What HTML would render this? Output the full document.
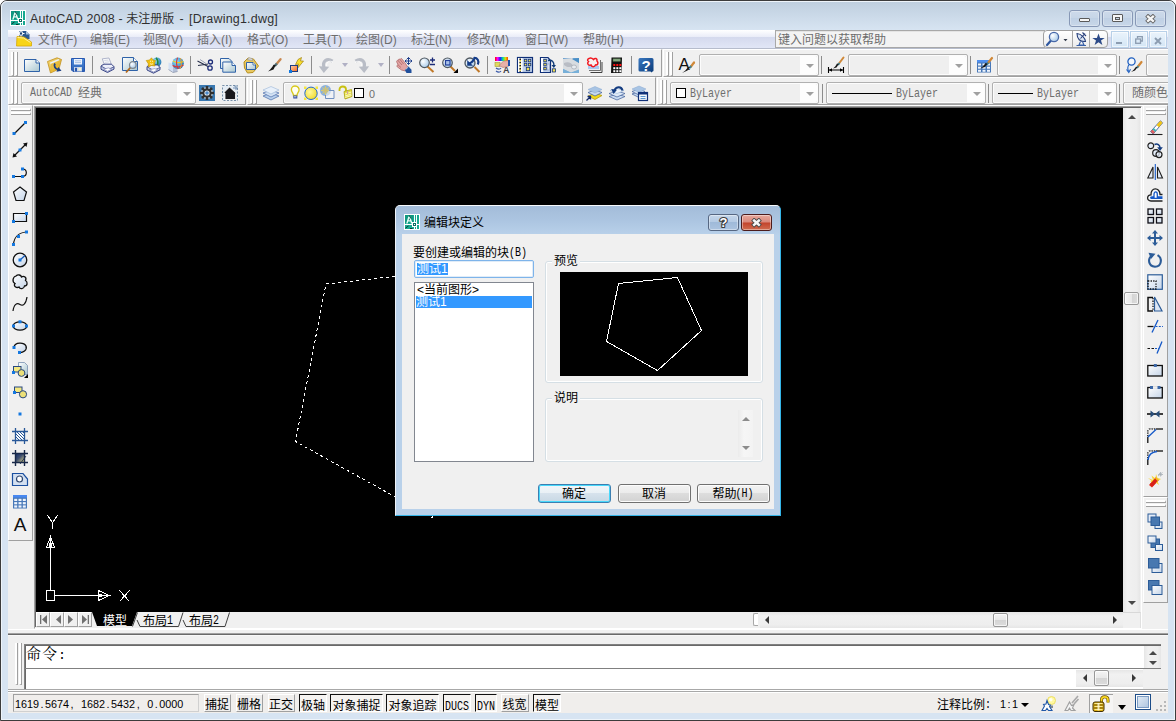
<!DOCTYPE html>
<html lang="zh-CN"><head><meta charset="utf-8"><title>AutoCAD 2008 - 未注册版 - [Drawing1.dwg]</title>
<style>
*{box-sizing:border-box;margin:0;padding:0}
html,body{width:1176px;height:721px;overflow:hidden;background:#fff}
body{font-family:"Liberation Sans","Noto Sans CJK SC",sans-serif;font-size:12px;color:#000;position:relative}
.a{position:absolute}
.t{position:absolute;white-space:nowrap;line-height:1}
#win{left:0;top:0;width:1176px;height:721px;background:#d7e4f2;border:1px solid #3c3c3c;border-radius:7px 7px 0 0}
#winhi{left:1px;top:1px;width:1174px;height:719px;border:1px solid #eef4fa;border-radius:6px 6px 0 0;background:linear-gradient(#bfcfdf 0px,#d7e4f2 28px,#d7e4f2 100%)}
#title{font-size:12.5px;line-height:16px;color:#303030}
.cap{position:absolute;top:10px;width:31px;height:17px;border:1px solid #8798b6;border-radius:3px;background:linear-gradient(#cddaea,#c6d5e7 50%,#bfd0e4 50%,#c8d7e9);box-shadow:inset 0 0 0 1px rgba(255,255,255,.3)}
#menubar{left:8px;top:30px;width:1160px;height:19px;background:linear-gradient(#ffffff 0px,#e9ecf8 7px,#d4d9ed 7px,#e1e6f6 18px,#b6bccc 18px,#b6bccc 19px)}
.mi{position:absolute;top:33px;font-size:12px;color:#6d6d6d;white-space:nowrap;line-height:14px;letter-spacing:0px}
#search{background:#f3f3f3;border:1px solid #a8a8a8;border-right:none;box-shadow:inset 0 1px 0 #e4e4e4}
#infoc{background:linear-gradient(#ffffff,#ececec);border:1px solid #a0a0a0;border-radius:4px}
.mdi{position:absolute;top:31px;width:18px;height:17px;border:1px solid #b8d0e8;background:linear-gradient(#eaf3fb,#d4e6f6);box-shadow:inset 0 0 0 1px rgba(255,255,255,.6)}
#client{left:8px;top:49px;width:1160px;height:664px;background:#f0f0f0;overflow:hidden}
.tb{position:absolute;height:28px;border-top:1px solid #fff;border-left:1px solid #fff;border-bottom:1px solid #a0a0a0;border-right:1px solid #a0a0a0;background:#f0f0f0}
.gv{position:absolute;width:3px;border-left:2px solid #fff;border-right:1px solid #a0a0a0;border-bottom:1px solid #a0a0a0}
.gh{position:absolute;height:3px;border-top:2px solid #fff;border-bottom:1px solid #a0a0a0;border-right:1px solid #a0a0a0}
.sep{position:absolute;width:1px;background:#8c8c8c}
.dd{position:absolute;width:0;height:0;border-left:3.5px solid transparent;border-right:3.5px solid transparent;border-top:4px solid #000}
.combo{position:absolute;height:22px;border:1px solid #b0b0b0;border-radius:2px;background:#efefef;box-shadow:inset 0 0 0 1px #fcfcfc}
.combo .arr{position:absolute;right:4px;top:9px;width:0;height:0;border-left:4px solid transparent;border-right:4px solid transparent;border-top:4px solid #a0a0a0}
.combo .ab{position:absolute;right:1px;top:1px;bottom:1px;width:17px;background:#fdfdfd;border-radius:0 2px 2px 0}
.sun{font-family:"Liberation Mono","Noto Sans CJK SC",monospace;font-size:10px;line-height:12px;display:inline-block;transform:translateY(-1px) scaleY(1.22);transform-origin:0 78%}
.dis{color:#6d6d6d}
.ic{position:absolute;width:16px;height:16px;overflow:visible}
.vsb{background:linear-gradient(90deg,#e6e6e6,#f1f1f1 25%,#eeeeee 80%,#e6e6e6)}
.hsb{background:linear-gradient(#e6e6e6,#f1f1f1 25%,#eeeeee 80%,#e6e6e6)}
.au,.ad,.al,.ar{position:absolute;width:0;height:0}
.au{border-left:4px solid transparent;border-right:4px solid transparent;border-bottom:4px solid #484848}
.ad{border-left:4px solid transparent;border-right:4px solid transparent;border-top:4px solid #484848}
.al{border-top:4px solid transparent;border-bottom:4px solid transparent;border-right:4px solid #383838}
.ar{border-top:4px solid transparent;border-bottom:4px solid transparent;border-left:4px solid #383838}
.thumb{position:absolute;border:1px solid #979797;border-radius:2px;background:linear-gradient(#f4f4f4,#e8e8e8 50%,#d4d4d4 50%,#dcdcdc);box-shadow:inset 0 0 0 1px rgba(255,255,255,.7)}
.nav{position:absolute;width:14px;height:15px;border-left:1px solid #fff;border-top:1px solid #fff;border-right:1px solid #a0a0a0;border-bottom:1px solid #a0a0a0;background:#f0f0f0}
#status{background:#f0eeec;border-top:1px solid #a8a8a8;box-shadow:inset 0 1px 0 #fff}
.sunk{position:absolute;border-left:1px solid #a0a0a0;border-top:1px solid #a0a0a0;border-right:1px solid #d0d0d0;border-bottom:1px solid #d0d0d0}
.sb0,.sb1{position:absolute;height:18px;font-size:12px;line-height:12px;white-space:nowrap;overflow:hidden;text-align:center;padding-top:3px}
.sb0{border-left:1px solid #fff;border-top:1px solid #fff;border-right:1px solid #a0a0a0;border-bottom:1px solid #a0a0a0;padding-top:4px;text-indent:-1px}
.sb1{height:18px;border-left:1px solid #101010;border-top:1px solid #101010;border-right:1px solid #fff;border-bottom:1px solid #fff;padding-top:5px;background:#f5f3f1}
.sb1 .sun,.sb0 .sun{font-size:10px;position:relative;top:1px}
#dlg{left:395px;top:205px;width:386px;height:311px;background:#b9d1ea;border-radius:5px 5px 0 0;border-right:1px solid #35b5e8;border-bottom:1px solid #35b5e8;border-top:1px solid #f6f9fc;border-left:1px solid #eef3f9}
#dlgcap{left:0;top:0;width:384px;height:29px;border-radius:4px 4px 0 0;background:linear-gradient(#a3bcd9,#acc5e1 50%,#b9d1ea)}
#dlgc{left:6px;top:28px;width:372px;height:275px;background:#f0f0f0}
.dcap{position:absolute;top:8px;width:30px;height:17px;border:1px solid #566782;border-radius:3px;box-shadow:inset 0 0 0 1px rgba(255,255,255,.4)}
.grp{position:absolute;border:1px solid #d5dfe5;border-radius:3px;box-shadow:inset 0 0 0 1px #fff}
.glab{font-size:12px;background:#f0f0f0;padding:0 2px;line-height:13px}
.btn{position:absolute;height:19px;border:1px solid #707070;border-radius:3px;background:linear-gradient(#f2f2f2,#ebebeb 50%,#dddddd 50%,#d2d2d2);box-shadow:inset 0 0 0 1px #fcfcfc;text-align:center;font-size:12px;line-height:17px;white-space:nowrap;text-indent:-1px;padding-top:1px}
.btn.def{border-color:#3c7fb1;box-shadow:inset 0 0 0 1px #48d8fb;background:linear-gradient(#f2f6fa,#e8f0f5 50%,#d6e2ec 50%,#c8d8e4)}
.thumb.tv{background:linear-gradient(90deg,#f4f4f4,#e8e8e8 50%,#d4d4d4 50%,#dcdcdc)}
.ss{font-family:"Liberation Sans","Noto Sans CJK SC",sans-serif}
.dig{font-family:"Liberation Sans",sans-serif;font-size:10.8px;line-height:12px}
.pc{display:inline-block;width:6px;text-align:center}
</style></head>
<body>

<svg width="0" height="0" style="position:absolute"><defs>
<linearGradient id="gpage" x1="0" y1="0" x2="1" y2="1"><stop offset="0" stop-color="#ffffff"/><stop offset="1" stop-color="#a9c6d0"/></linearGradient>
<linearGradient id="gfold" x1="0" y1="0" x2="1" y2="1"><stop offset="0" stop-color="#f7dc7a"/><stop offset="1" stop-color="#d9a520"/></linearGradient>
<linearGradient id="gblue" x1="0" y1="0" x2="0" y2="1"><stop offset="0" stop-color="#4f8fe0"/><stop offset="1" stop-color="#2a5db0"/></linearGradient>
<radialGradient id="glens" cx="0.35" cy="0.35" r="0.8"><stop offset="0" stop-color="#ffffff"/><stop offset="1" stop-color="#9cc3e6"/></radialGradient>
<radialGradient id="gglobe" cx="0.35" cy="0.35" r="0.8"><stop offset="0" stop-color="#8fe0ff"/><stop offset="1" stop-color="#1868a8"/></radialGradient>
<radialGradient id="gsun" cx="0.4" cy="0.4" r="0.7"><stop offset="0" stop-color="#fff9a0"/><stop offset="1" stop-color="#f0d820"/></radialGradient>
<linearGradient id="gorange" x1="0" y1="0" x2="1" y2="1"><stop offset="0" stop-color="#ffd0a8"/><stop offset="1" stop-color="#f06820"/></linearGradient>
<linearGradient id="ghelp" x1="0" y1="0" x2="1" y2="1"><stop offset="0" stop-color="#3a78c0"/><stop offset="1" stop-color="#0a3a78"/></linearGradient>
<linearGradient id="grain" x1="0" y1="0" x2="1" y2="0"><stop offset="0" stop-color="#ff0000"/><stop offset="0.2" stop-color="#ff00ff"/><stop offset="0.4" stop-color="#2020ff"/><stop offset="0.6" stop-color="#00e0a0"/><stop offset="0.8" stop-color="#e0e000"/><stop offset="1" stop-color="#ff4000"/></linearGradient>
<linearGradient id="gbox" x1="0" y1="0" x2="1" y2="1"><stop offset="0" stop-color="#ffffff"/><stop offset="1" stop-color="#c4d4e8"/></linearGradient>
<linearGradient id="gbtn" x1="0" y1="0" x2="0" y2="1"><stop offset="0" stop-color="#f4f4f4"/><stop offset="0.5" stop-color="#ececec"/><stop offset="0.5" stop-color="#dedede"/><stop offset="1" stop-color="#d0d0d0"/></linearGradient>
</defs></svg>
<div id="win" class="a"></div><div id="winhi" class="a"></div>
<svg class="a" style="left:10px;top:10px" width="16" height="16" viewBox="0 0 16 16"><rect x="0" y="0" width="16" height="16" fill="#fff"/><rect x="1" y="1" width="14" height="14" fill="#18a890"/><path d="M1 1H9V9H1Z" fill="#109880"/><path d="M2.2 9.5L4.3 2.5H6.2L8.6 9.5H7L6.4 7.5H4.2L3.6 9.5Z" fill="#e8fff8"/><path d="M4.6 6.2H6L5.3 4Z" fill="#0a6a5c"/><path d="M5.3 1.5L6.8 4.5" stroke="#063c34" stroke-width="0.9"/><path d="M1 10.5H15M10.5 1V15M12.5 1V8M12.5 13V15" stroke="#fff" stroke-width="1"/><rect x="8.5" y="8.5" width="4" height="4" fill="#0b6b5e" stroke="#fff" stroke-width="1"/><rect x="10" y="10" width="1" height="1" fill="#fff"/><path d="M1.5 14L4.5 12M6 14.5H8.5" stroke="#063c34" stroke-width="1"/></svg>
<div class="t" id="title" style="left:30px;top:11px"><span style="letter-spacing:.12px">AutoCAD 2008 - </span><span style="font-size:12px">未注册版</span><span style="letter-spacing:.2px;word-spacing:1.5px"> - [Drawing1.dwg]</span></div>
<div class="cap" style="left:1069px"><div class="a" style="left:9px;top:7px;width:11px;height:4px;border:1px solid #5a5a5a;background:#f6f6f6;border-radius:1px"></div></div>
<div class="cap" style="left:1102px"><div class="a" style="left:9px;top:3px;width:11px;height:8px;border:1px solid #5a5a5a;background:#f6f6f6;border-radius:1px"></div><div class="a" style="left:12px;top:6px;width:5px;height:3px;border:1px solid #5a5a5a;background:#c9d6e6"></div></div>
<div class="cap" style="left:1135px"><svg class="a" style="left:8px;top:3px" width="13" height="10" viewBox="0 0 13 10"><path d="M2.6 1.2L10.4 8.2M10.4 1.2L2.6 8.2" stroke="#646464" stroke-width="4.2" fill="none" stroke-linecap="butt"/><path d="M3.2 1.8L9.8 7.6M9.8 1.8L3.2 7.6" stroke="#f6f6f6" stroke-width="2.4" fill="none" stroke-linecap="butt"/></svg></div>
<div id="menubar" class="a"></div>
<svg class="a" style="left:16px;top:30px" width="16" height="17" viewBox="0 0 16 17"><path d="M3 1H10L13.5 4.5V9H3Z" fill="#2a5890"/><path d="M10 1V4.5H13.5Z" fill="#a8c0dc"/><path d="M5 0V7M1.5 3.5H8.5" stroke="#fff" stroke-width="1"/><rect x="3.5" y="2" width="3" height="3" fill="#1c4478" stroke="#fff" stroke-width="0.8"/><path d="M0.5 16L1 6.5L8 7L15.5 12V16Z" fill="#f8d418" stroke="#d8a808" stroke-width="0.8"/><path d="M1.5 7.5L7.5 8L14.5 12.5" stroke="#fff0a0" stroke-width="1" fill="none"/></svg>
<div class="mi" style="left:38px">文件(F)</div><div class="mi" style="left:90px">编辑(E)</div><div class="mi" style="left:143px">视图(V)</div><div class="mi" style="left:197px">插入(I)</div><div class="mi" style="left:247px">格式(O)</div><div class="mi" style="left:303px">工具(T)</div><div class="mi" style="left:356px">绘图(D)</div><div class="mi" style="left:411px">标注(N)</div><div class="mi" style="left:467px">修改(M)</div><div class="mi" style="left:525px">窗口(W)</div><div class="mi" style="left:583px">帮助(H)</div>
<div class="a" id="search" style="left:775px;top:30px;width:270px;height:18px"></div><div class="t" style="left:778px;top:34px;font-size:12px;line-height:13px;color:#6d6d6d">键入问题以获取帮助</div>
<div class="a" id="infoc" style="left:1043px;top:30px;width:65px;height:18px"></div><div class="a" style="left:1072px;top:31px;width:1px;height:16px;background:#a8a8a8"></div><div class="a" style="left:1089px;top:31px;width:1px;height:16px;background:#a8a8a8"></div><svg class="a" style="left:1045px;top:31px" width="62" height="16" viewBox="0 0 62 16"><path d="M2 14L6 9.5" stroke="#3058a0" stroke-width="2.2" stroke-linecap="round"/><circle cx="9" cy="6" r="4.6" fill="url(#glens)" stroke="#4868a8" stroke-width="1.3"/><path d="M18.5 8H22.5L20.5 10.3Z" fill="#303848"/><path d="M32 2.5C32 8 35 11 40.5 10.5C40 7 36.5 3 32 2.5Z" fill="#dce6f4" stroke="#28407c" stroke-width="1.1"/><path d="M35.5 7.5L40 2.5M37.5 1.5L41 5" stroke="#28407c" stroke-width="1.1" fill="none"/><path d="M35.5 10.5L34 14H39L37.5 10.8M31.5 14.5H41" stroke="#3860a8" stroke-width="1.1" fill="none"/><path d="M53.5 2.5L55.1 6.9H59.7L56 9.6L57.4 14L53.5 11.3L49.6 14L51 9.6L47.3 6.9H51.9Z" fill="#2c4a88"/></svg>
<div class="mdi" style="left:1111px"></div><div class="mdi" style="left:1130px"></div><div class="mdi" style="left:1149px"></div><div class="a" style="left:1116px;top:42px;width:6px;height:2px;background:#8c9cb0"></div><svg class="a" style="left:1135px;top:36px" width="8" height="8" viewBox="0 0 8 8"><path d="M2.5 2.5V0.7H7.3V5H5.5" fill="none" stroke="#8c9cb0" stroke-width="1.3"/><rect x="0.7" y="3" width="4.8" height="4.3" fill="none" stroke="#8c9cb0" stroke-width="1.3"/></svg><svg class="a" style="left:1154px;top:37px" width="8" height="8" viewBox="0 0 8 8"><path d="M1 1L7 7M7 1L1 7" stroke="#8c9cb0" stroke-width="1.9"/></svg>
<div id="client" class="a"></div>
<div class="a" style="left:0;top:0;width:1168px;height:110px;overflow:hidden"><div class="tb" style="left:8px;top:49px;width:654px;height:28px"></div><div class="gv" style="left:11px;top:52px;height:24px"></div><div class="gv" style="left:15px;top:52px;height:24px"></div><svg class="ic" style="left:24px;top:57px;width:16px;height:16px" viewBox="0 0 16 16"><path d="M0.5 2.5H12L15.5 6V14.5H0.5Z" fill="url(#gpage)" stroke="#2f62a8"/><path d="M12 2.5V6H15.5" fill="#fff" stroke="#2f62a8"/></svg><svg class="ic" style="left:47px;top:57px;width:16px;height:16px" viewBox="0 0 16 16"><path d="M0.5 4.5L10 0.8L14.5 2.5L12 12L3.5 16Z" fill="url(#gfold)" stroke="#c09020" stroke-width="0.8"/><path d="M3 5.5L11.5 2L12.5 3L5 14Z" fill="#eaf2f8"/><path d="M3.5 7L12.5 3.2L11.5 11.5L4 15.5Z" fill="#e8b830" opacity="0.9"/><path d="M8 6.5C6.5 9 8 11.5 11 12.5" fill="none" stroke="#1c3f80" stroke-width="1.8"/><path d="M9.5 14.8L14.5 13.8L11.3 10Z" fill="#1c3f80"/></svg><svg class="ic" style="left:70px;top:57px;width:16px;height:16px" viewBox="0 0 16 16"><path d="M1.5 1.5H14.5V14.5H3L1.5 13Z" fill="url(#gblue)" stroke="#2858b0"/><rect x="4" y="2" width="8" height="5.5" fill="#eef4fc"/><path d="M5 3.8h6M5 5.6h6" stroke="#98b4dc" stroke-width="0.8"/><rect x="4" y="10" width="8" height="4.5" fill="#c8d4e8"/><rect x="5" y="10.8" width="2" height="3.7" fill="#2858b0"/><rect x="8.5" y="10.8" width="2.5" height="2.7" fill="#f4f4d0"/></svg><svg class="ic" style="left:99px;top:57px;width:16px;height:16px" viewBox="0 0 16 16"><path d="M3.3 1.8L10 1L12.3 7.3L5.6 8.6Z" fill="#f8f9fc" stroke="#a0a6c0" stroke-width="0.8"/><path d="M5.2 3.6L9.5 3M5.8 5.4L10.2 4.8" stroke="#c8ccd8" stroke-width="0.7"/><g transform="translate(0,0.5)"><path d="M2 8.5L5 6.8L12.5 6.8L15 9.3V11.6L8.5 15L2 11.8Z" fill="#c4cce4" stroke="#3c4888" stroke-width="1"/><path d="M2 8.5L5 6.8L12.5 6.8L15 9.3L8.5 12.2Z" fill="#eef0fa" stroke="#3c4888" stroke-width="0.8"/><path d="M4.5 11.6L8.5 13.8L12.8 11.6L9.5 10.4Z" fill="#fff" stroke="#5860a0" stroke-width="0.5"/></g></svg><svg class="ic" style="left:122px;top:57px;width:16px;height:16px" viewBox="0 0 16 16"><path d="M0.5 0.5H11.5L15.5 4.5V13.5H0.5Z" fill="url(#gpage)" stroke="#2f62a8"/><path d="M11.5 0.5V4.5H15.5" fill="#fff" stroke="#2f62a8"/><path d="M4 15.5L8.5 10.5" stroke="#b0681c" stroke-width="1.8"/><circle cx="10.8" cy="8" r="3.3" fill="url(#glens)" stroke="#808890" stroke-width="1.2"/></svg><svg class="ic" style="left:145px;top:57px;width:16px;height:16px" viewBox="0 0 16 16"><circle cx="11.8" cy="5" r="4.6" fill="url(#gglobe)"/><path d="M11 0.8C13 2.5 13.5 6.5 12 9.5" stroke="#208840" stroke-width="1.6" fill="none"/><g transform="translate(0,1.2)"><path d="M2 8.5L5 6.8L12.5 6.8L15 9.3V11.6L8.5 15L2 11.8Z" fill="#c4cce4" stroke="#3c4888" stroke-width="1"/><path d="M2 8.5L5 6.8L12.5 6.8L15 9.3L8.5 12.2Z" fill="#eef0fa" stroke="#3c4888" stroke-width="0.8"/><path d="M4.5 11.6L8.5 13.8L12.8 11.6L9.5 10.4Z" fill="#fff" stroke="#5860a0" stroke-width="0.5"/></g><path d="M1.2 3.5L4.5 3L6.5 0.8L8 3L10.5 3.5L9.5 6.5L10 9L6.5 8.5L3.5 10L3.2 6.5Z" fill="#f0c010" stroke="#c09000" stroke-width="0.6"/><path d="M5 4.5L6 4M7 4.5L8 4M5 6.5C6 7.5 7 7.5 8 6.5" stroke="#fff8d0" stroke-width="0.9" fill="none"/></svg><svg class="ic" style="left:168px;top:57px;width:16px;height:16px" viewBox="0 0 16 16"><path d="M0.5 5.5L5 7V15L0.5 12.5Z" fill="#d4e0f4"/><path d="M5 7L9.5 12V14.5L5 15.5Z" fill="#b4c0d8"/><path d="M0.5 12.5L5 15.5L9.5 14.5" fill="none" stroke="#909ab0" stroke-width="0.8"/><circle cx="10" cy="6.3" r="5.8" fill="url(#gglobe)"/><path d="M5 4C8 6 12 6 15.5 4.5" stroke="#e8d020" stroke-width="1.1" fill="none"/><path d="M9.5 0.6C8 5 8.5 9 10.3 12" stroke="#e03030" stroke-width="1.1" fill="none"/><path d="M4.6 8.5C8 10.5 12.5 10 15.5 8" stroke="#e03030" stroke-width="1.1" fill="none"/><path d="M12.5 1.2C14 5 13.5 9 12 11.7" stroke="#f0a030" stroke-width="1" fill="none"/></svg><svg class="ic" style="left:197px;top:57px;width:16px;height:16px" viewBox="0 0 16 16"><path d="M0.5 4L11 9.5M1 8.5L11 7" stroke="#28304c" stroke-width="1.1" fill="none"/><path d="M3 2.5L9 6.5" stroke="#8890a8" stroke-width="0.8"/><circle cx="13.5" cy="5" r="2" fill="none" stroke="#1c2c78" stroke-width="1.3"/><circle cx="13" cy="11" r="2.2" fill="none" stroke="#1c2c78" stroke-width="1.3"/></svg><svg class="ic" style="left:220px;top:57px;width:16px;height:16px" viewBox="0 0 16 16"><path d="M0.5 1.5H9L12 4.5V11.5H0.5Z" fill="url(#gpage)" stroke="#2f62a8"/><path d="M2.8 5H12L15.5 8.5V15.2H2.8Z" fill="url(#gpage)" stroke="#2f62a8"/><path d="M12 5V8.5H15.5" fill="#fff" stroke="#2f62a8"/></svg><svg class="ic" style="left:243px;top:57px;width:16px;height:16px" viewBox="0 0 16 16"><path d="M1 5L5 1L10.5 2L15.5 9L10 15.5L4.5 16L1.5 11Z" fill="#e8c860" stroke="#b89020" stroke-width="1"/><path d="M4 2.5L6 0.8L9 1.5L10 3.5Z" fill="#e0e0e0" stroke="#909090" stroke-width="0.6"/><path d="M3.5 5.5H10L12.5 8V12.5H3.5Z" fill="url(#gpage)" stroke="#2f62a8"/><path d="M10 5.5V8H12.5" fill="#fff" stroke="#2f62a8" stroke-width="0.8"/></svg><svg class="ic" style="left:266px;top:57px;width:16px;height:16px" viewBox="0 0 16 16"><path d="M14.5 2.2L10.5 7" stroke="#c88850" stroke-width="2.4" stroke-linecap="round"/><path d="M10.8 6.5L8.8 9" stroke="#507078" stroke-width="2.4"/><path d="M9.8 8L7.5 12.5L2 14.5C4.5 12.5 6 10.5 7.5 7.8Z" fill="#181818"/></svg><svg class="ic" style="left:289px;top:57px;width:16px;height:16px" viewBox="0 0 16 16"><path d="M9 2.5L12.5 0.5L11.5 4L14.5 4L8 12L9.5 7L6.5 7.5Z" fill="#f8e030" stroke="#a08010" stroke-width="0.7"/><path d="M12.8 0.3L7.8 11.8" stroke="#303030" stroke-width="0.5" opacity="0"/><rect x="1.5" y="8.5" width="7" height="6" fill="url(#gorange)" stroke="#1c3c80"/><rect x="0" y="13" width="3" height="3" fill="#1078e0"/></svg><svg class="ic" style="left:318px;top:57px;width:16px;height:16px" viewBox="0 0 16 16"><path d="M14.5 4.2C9 0.5 4 4 6 11" fill="none" stroke="#b9bdc6" stroke-width="3.2"/><path d="M0.8 9.2L11.2 9.8L5.8 16Z" fill="#b9bdc6"/><path d="M15 5.2C11.5 3 8.2 5 8.6 9" fill="none" stroke="#fff" stroke-width="0.9"/></svg><svg class="ic" style="left:354px;top:57px;width:16px;height:16px" viewBox="0 0 16 16"><path d="M1.5 4.2C7 0.5 12 4 10 11" fill="none" stroke="#b9bdc6" stroke-width="3.2"/><path d="M15.2 9.2L4.8 9.8L10.2 16Z" fill="#b9bdc6"/><path d="M1 5.4C4.5 3 7.8 5 7.4 9" fill="none" stroke="#fff" stroke-width="0.9"/></svg><svg class="ic" style="left:396px;top:57px;width:16px;height:16px" viewBox="0 0 16 16"><path d="M0.8 5.2C0.3 3.8 1.2 3 2.3 3.6C2 2.2 3.3 1.6 4.2 2.6C4.4 1.4 5.8 1.2 6.4 2.4L9.5 6.5L12 10.5L9.5 14L5.5 13L1.2 9.8C0.2 8.8 1.2 7.8 2.3 8.3Z" fill="#e2a4a4" stroke="#a86060" stroke-width="0.7"/><path d="M2.3 3.8L6 8M4.2 2.8L7.6 7M2.5 8.4L5 10.5" stroke="#a86060" stroke-width="0.7" fill="none"/><path d="M8.8 13L12.3 9.3L15.5 12.8V16H10.5Z" fill="#20509c"/><path d="M9.6 12.6L12.3 10" stroke="#fff" stroke-width="0.7"/><path d="M12.5 0.5V7.5M9 4H16M11 2L12.5 0.5L14 2M11 6L12.5 7.5L14 6M10.5 2.5L9 4L10.5 5.5M14.5 2.5L16 4L14.5 5.5" stroke="#20408c" stroke-width="1" fill="none"/></svg><svg class="ic" style="left:419px;top:57px;width:16px;height:16px" viewBox="0 0 16 16"><path d="M8.5 9.5L14.5 15" stroke="#c07828" stroke-width="2"/><circle cx="5.5" cy="5.8" r="4.8" fill="url(#glens)" stroke="#505860" stroke-width="1.2"/><path d="M13.5 0.5V5.5M11 3H16M11 7.5H16" stroke="#1c2c78" stroke-width="1.3"/></svg><svg class="ic" style="left:442px;top:57px;width:16px;height:16px" viewBox="0 0 16 16"><path d="M8.5 9.5L13 14" stroke="#c07828" stroke-width="2"/><circle cx="5.5" cy="5.8" r="4.8" fill="url(#glens)" stroke="#505860" stroke-width="1.2"/><rect x="3.5" y="3.5" width="4.5" height="4.5" fill="#a8c0e8" stroke="#20409c" stroke-width="1.2"/><path d="M16 11.5V16H11.5Z" fill="#000"/></svg><svg class="ic" style="left:464px;top:57px;width:16px;height:16px" viewBox="0 0 16 16"><path d="M10.5 10L15.5 15" stroke="#c07828" stroke-width="2"/><circle cx="6" cy="6" r="5" fill="url(#glens)" stroke="#505860" stroke-width="1.3"/><path d="M3.2 3V8.8H9L7 6.8C9 5.8 10.5 4 11.2 2L9.2 1.2C8.6 3 7.4 4.2 5.4 5.2Z" fill="#143c88"/><path d="M9.5 1C13.5 0.5 15.5 4 13.8 7.5" fill="none" stroke="#143c88" stroke-width="2.2"/></svg><svg class="ic" style="left:494px;top:57px;width:16px;height:16px" viewBox="0 0 16 16"><rect x="1" y="0" width="13" height="4" fill="url(#grain)"/><rect x="1" y="5.5" width="5" height="4" fill="#e0d860" stroke="#a8a030" stroke-width="0.6"/><path d="M5 8.5L9.5 4L15 3.5V9L9 10.5Z" fill="#e8b0a8" stroke="#b07068" stroke-width="0.6"/><rect x="14" y="3" width="2" height="6" fill="#2050a8"/><path d="M2 11C4 12.5 6 12.5 7 11M2 14C4 15.5 6 15.5 7 14" stroke="#3858a8" stroke-width="1.2" fill="none"/><text x="9" y="16" font-family="Liberation Sans,sans-serif" font-size="9" font-weight="bold" fill="#404048">A</text></svg><svg class="ic" style="left:517px;top:57px;width:16px;height:16px" viewBox="0 0 16 16"><rect x="0.5" y="0.5" width="15" height="15" fill="#c4d4ec" stroke="#103078" stroke-width="1.2"/><rect x="1" y="1" width="4.5" height="14" fill="#fff"/><path d="M3.2 1.5V15" stroke="#202020" stroke-width="1.6" stroke-dasharray="1.6 1.6"/><path d="M3.2 3V15" stroke="#e8d020" stroke-width="1.4" stroke-dasharray="1.2 2"/><g fill="#f0e050" stroke="#103078" stroke-width="0.8"><rect x="7.3" y="2.3" width="2.5" height="2.5"/><rect x="11.3" y="2.3" width="2.5" height="2.5"/><rect x="7.3" y="6.3" width="2.5" height="2.5"/><rect x="11.3" y="6.3" width="2.5" height="2.5"/><rect x="9.3" y="10.3" width="3.4" height="3.4"/></g></svg><svg class="ic" style="left:540px;top:57px;width:16px;height:16px" viewBox="0 0 16 16"><path d="M0.5 0.5H8L10.5 3.5V15.5H0.5Z" fill="#c4d4ec" stroke="#103078" stroke-width="1.2"/><rect x="1" y="1" width="2.2" height="14" fill="#fff"/><g fill="#f0e050" stroke="#103078" stroke-width="0.8"><rect x="3.8" y="2.3" width="2.5" height="2.5"/><rect x="3.8" y="6.3" width="2.5" height="2.5"/><rect x="3.8" y="10.3" width="2.5" height="2.5"/><rect x="12.3" y="11.8" width="3.2" height="3.2"/></g><path d="M8 3.5C12 2.5 14 5 14 8.5" fill="none" stroke="#103c78" stroke-width="1.4"/><path d="M11.5 8L16 8L13.8 11Z" fill="#103c78"/><rect x="7" y="7" width="2.5" height="6" fill="#d8e0f0" stroke="#8898b8" stroke-width="0.6"/></svg><svg class="ic" style="left:563px;top:57px;width:16px;height:16px" viewBox="0 0 16 16"><rect x="0" y="1" width="16" height="15" fill="#6aa0d0"/><path d="M0 2L9 1L16 6V13L8 16L0 12Z" fill="#d8dce0"/><path d="M1 6C5 4 9 6 10 9C7 11 3 10 1 8Z" fill="#b8bcc4"/><path d="M0 12L8 15.5L16 12.5V16H0Z" fill="#78b0d8"/><path d="M9 2L16 1V6Z" fill="#4a90c8"/><ellipse cx="11" cy="10" rx="2.5" ry="2" fill="#e8ecf0" stroke="#98a0a8" stroke-width="0.6"/></svg><svg class="ic" style="left:586px;top:57px;width:16px;height:16px" viewBox="0 0 16 16"><path d="M3 13.5H14.5V3" fill="none" stroke="#707070" stroke-width="1"/><path d="M4.5 15.5H16V5" fill="none" stroke="#404040" stroke-width="1"/><rect x="2" y="2" width="11" height="10.5" fill="#e8eef8"/><rect x="2" y="9" width="11" height="3" fill="#a8c8f0"/><path d="M3 1.5C5 0 7 2 7.5 2.5C9 0.5 11.5 1.5 11 4C13 6 11.5 8.5 9.5 8C8.5 10.5 5.5 10 5 8C2.5 9 0.5 6.5 2.5 4.5C1 3.5 1.5 2 3 1.5Z" fill="#f8f0f0" stroke="#f01820" stroke-width="1.5"/></svg><svg class="ic" style="left:609px;top:57px;width:16px;height:16px" viewBox="0 0 16 16"><path d="M2.5 0.5H13L12.5 16H2Z" fill="#101010"/><rect x="4" y="1.8" width="7.5" height="2.6" fill="#88a880" stroke="#486848" stroke-width="0.5"/><g fill="#ff1010"><rect x="4.3" y="7" width="2" height="2"/><rect x="7.3" y="7" width="2" height="2"/><rect x="10.3" y="7" width="2" height="2"/></g><g fill="#fff"><rect x="4.3" y="10.2" width="2" height="2"/><rect x="7.3" y="10.2" width="2" height="2"/><rect x="10.3" y="10.2" width="2" height="2"/><rect x="4.3" y="13.2" width="2" height="2"/><rect x="7.3" y="13.2" width="2" height="2"/><rect x="10.3" y="13.2" width="2" height="2"/></g></svg><svg class="ic" style="left:638px;top:57px;width:16px;height:16px" viewBox="0 0 16 16"><path d="M2 1H14Q15.5 1 15.5 2.5V13.5Q15.5 14.5 14.5 14.5L13.5 15.5L12.5 14.5H2Q0.5 14.5 0.5 13V2.5Q0.5 1 2 1Z" fill="url(#ghelp)"/><text x="8" y="13.5" text-anchor="middle" font-family="Liberation Sans,sans-serif" font-size="15" font-weight="bold" fill="#fff">?</text></svg><div class="sep" style="left:92px;top:56px;height:18px"></div><div class="sep" style="left:190px;top:56px;height:18px"></div><div class="sep" style="left:311px;top:56px;height:18px"></div><div class="sep" style="left:389px;top:56px;height:18px"></div><div class="sep" style="left:487px;top:56px;height:18px"></div><div class="sep" style="left:631px;top:56px;height:18px"></div><div class="dd" style="left:342px;top:63px;border-top-color:#b0b0c4"></div><div class="dd" style="left:378px;top:63px;border-top-color:#b0b0c4"></div>
<div class="tb" style="left:663px;top:49px;width:520px;height:28px"></div><div class="gv" style="left:666px;top:52px;height:24px"></div><div class="gv" style="left:670px;top:52px;height:24px"></div><svg class="ic" style="left:679px;top:57px;width:16px;height:16px" viewBox="0 0 16 16"><text x="-0.5" y="13" font-family="Liberation Sans,sans-serif" font-size="17" fill="#101010">A</text><path d="M15 5.5L12 9.5" stroke="#d08838" stroke-width="2.2" stroke-linecap="round"/><path d="M12.2 9L10.5 11" stroke="#408090" stroke-width="2"/><path d="M11 10.3L8.5 13.5L3 16C5.5 14.5 7.5 12.5 9 10Z" fill="#181818"/></svg><div class="combo" style="left:699px;top:54px;width:120px"><div class="ab"></div><div class="arr"></div></div><div class="sep" style="left:821px;top:56px;height:18px"></div><svg class="ic" style="left:828px;top:57px;width:16px;height:16px" viewBox="0 0 16 16"><path d="M15.5 0.5L11 6.5" stroke="#d08838" stroke-width="2" stroke-linecap="round"/><path d="M11.5 6L10 8" stroke="#408090" stroke-width="1.8"/><path d="M10.8 7L8.5 10.5L5 11.5C6.5 10.5 8 8.5 9 6.5Z" fill="#181818"/><path d="M0.5 10V16M15.5 10V16M0.5 13H15.5" stroke="#000" stroke-width="1.1"/><path d="M1 13L4 11.3V14.7ZM15 13L12 11.3V14.7Z" fill="#000"/></svg><div class="combo" style="left:848px;top:54px;width:120px"><div class="ab"></div><div class="arr"></div></div><div class="sep" style="left:970px;top:56px;height:18px"></div><svg class="ic" style="left:977px;top:57px;width:16px;height:16px" viewBox="0 0 16 16"><rect x="0" y="3" width="14" height="12.5" fill="#4878b8"/><rect x="0" y="3" width="14" height="2.5" fill="#5090f0"/><g fill="#eef4fc"><rect x="1" y="6.5" width="3" height="2"/><rect x="5.5" y="6.5" width="3" height="2"/><rect x="10" y="6.5" width="3" height="2"/><rect x="1" y="9.7" width="3" height="2"/><rect x="5.5" y="9.7" width="3" height="2"/><rect x="10" y="9.7" width="3" height="2"/><rect x="1" y="12.8" width="3" height="2"/><rect x="5.5" y="12.8" width="3" height="2"/><rect x="10" y="12.8" width="3" height="2"/></g><path d="M15 1L11 6" stroke="#d08838" stroke-width="2.2" stroke-linecap="round"/><path d="M11.3 5.6L9.8 7.6" stroke="#408090" stroke-width="2"/><path d="M10.5 6.8L8 10L3 11.5C5 10.5 7 8.5 8.5 6Z" fill="#181818"/></svg><div class="combo" style="left:997px;top:54px;width:120px"><div class="ab"></div><div class="arr"></div></div><div class="sep" style="left:1119px;top:56px;height:18px"></div><svg class="ic" style="left:1126px;top:57px;width:16px;height:16px" viewBox="0 0 16 16"><circle cx="5.5" cy="4.5" r="3.6" fill="#f4f8fc" stroke="#2060c0" stroke-width="1.3"/><path d="M3 7.5C1.5 9.5 1.5 12 2.5 14.5" fill="none" stroke="#2060c0" stroke-width="1.1"/><path d="M0.5 12.5L2.8 15.5L4.5 12.2" fill="none" stroke="#2060c0" stroke-width="1.1"/><path d="M15.5 5L12 9.5" stroke="#d08838" stroke-width="2.2" stroke-linecap="round"/><path d="M12.3 9L10.8 11" stroke="#408090" stroke-width="2"/><path d="M11.5 10.3L9 13.5L5 15C7 13.8 8.5 12 10 9.8Z" fill="#181818"/></svg><div class="combo" style="left:1146px;top:54px;width:120px"><div class="ab"></div><div class="arr"></div></div>
<div class="tb" style="left:8px;top:77px;width:238px;height:28px"></div><div class="gv" style="left:11px;top:80px;height:24px"></div><div class="gv" style="left:15px;top:80px;height:24px"></div><div class="combo" style="left:21px;top:82px;width:175px"><div class="ab"></div><div class="arr"></div><div class="t ss dis" style="left:8px;top:4px;font-size:12px;line-height:13px"><span class="sun">AutoCAD&nbsp;</span>经典</div></div><svg class="ic" style="left:199px;top:85px;width:16px;height:16px" viewBox="0 0 16 16"><rect x="0" y="0" width="16" height="16" fill="#3a78b0"/><circle cx="8" cy="8" r="6" fill="#e8eef4" opacity="0.85"/><path d="M8 1V15M1 8H15M3 3L13 13M13 3L3 13" stroke="#303030" stroke-width="2.6"/><circle cx="8" cy="8" r="4.6" fill="#303030"/><circle cx="8" cy="8" r="2.6" fill="#e8eef4"/><circle cx="8" cy="8" r="1.8" fill="#4a88c8"/></svg><svg class="ic" style="left:222px;top:85px;width:16px;height:16px" viewBox="0 0 16 16"><rect x="0.5" y="0.5" width="15" height="15" fill="#e4ecf4" stroke="#7890a8" stroke-width="1" stroke-dasharray="2 1.5"/><path d="M12 1H14V5M11 3H16" stroke="#6080a8" stroke-width="0.8" fill="none"/><path d="M1.5 8L7.5 2L14.5 8.5H13.5V14.5H3V8Z" fill="#18181c" stroke="#fff" stroke-width="0.8"/></svg><div class="tb" style="left:247px;top:77px;width:409px;height:28px"></div><div class="gv" style="left:250px;top:80px;height:24px"></div><div class="gv" style="left:254px;top:80px;height:24px"></div><svg class="ic" style="left:263px;top:85px;width:16px;height:16px" viewBox="0 0 16 16"><path d="M0 11L8 8L16 11L8 15Z" fill="#b8d0ec" stroke="#4868a8" stroke-width="0.7"/><path d="M0 8L8 5L16 8L8 12Z" fill="#d4e2f4" stroke="#4868a8" stroke-width="0.7"/><path d="M0 5L8 1.5L16 5L8 9Z" fill="#e8f0fa" stroke="#88a8d0" stroke-width="0.5"/></svg><div class="combo" style="left:283px;top:82px;width:300px"><div class="ab"></div><div class="arr"></div><svg class="ic" style="left:6px;top:2px;width:16px;height:16px" viewBox="0 0 16 16"><path d="M5 1C2 1 1 3.5 1.5 5.5C2 7.5 3.5 8.5 3.5 10.5H7C7 8.5 8.5 7.5 9 5.5C9.5 3.5 8 1 5 1Z" fill="#fffff0" stroke="#d8c818" stroke-width="1.3"/><rect x="3.3" y="10.5" width="4" height="3" fill="#3850a0"/><rect x="4" y="11.3" width="2.4" height="1" fill="#c8d0e8"/></svg><svg class="ic" style="left:20px;top:3px;width:16px;height:16px" viewBox="0 0 16 16"><g fill="#f8e840"><rect x="0" y="0.5" width="2.5" height="2.5"/><rect x="11.5" y="0.5" width="2.5" height="2.5"/><rect x="0" y="11.5" width="2.5" height="2.5"/><rect x="11.5" y="11.5" width="2.5" height="2.5"/></g><circle cx="7" cy="7.3" r="6.2" fill="url(#gsun)" stroke="#2068d0" stroke-width="1"/></svg><svg class="ic" style="left:36px;top:2px;width:16px;height:16px" viewBox="0 0 16 16"><circle cx="5.5" cy="5.5" r="5.5" fill="#88b0e0"/><path d="M5.5 0.8V10.2M0.8 5.5H10.2M2.2 2.2L8.8 8.8M8.8 2.2L2.2 8.8" stroke="#d8c870" stroke-width="0.9"/><circle cx="5.5" cy="5.5" r="2.8" fill="none" stroke="#d8c870" stroke-width="1"/><circle cx="5.5" cy="5.5" r="1.6" fill="#d0c070"/><path d="M9 5.5H14V13.5H5.5V10" fill="#f0f4f8" fill-opacity="0.6" stroke="#7090c0" stroke-width="1"/></svg><svg class="ic" style="left:54px;top:2px;width:16px;height:16px" viewBox="0 0 16 16"><path d="M1.5 6V4.5C1.5 0.5 8 0.5 8 4.5V7" fill="none" stroke="#c8c010" stroke-width="1.8"/><path d="M6 6.5L13.5 4.5L14 11.5L7 14Z" fill="#e8e040" stroke="#a8a010" stroke-width="0.8"/><path d="M7 9L13.5 7M7 11L13.5 9M7 12.5L13.5 10.5" stroke="#fffff0" stroke-width="0.7"/><path d="M9.5 6V9" stroke="#d0a0a0" stroke-width="1.2"/></svg><div class="a" style="left:70px;top:5px;width:10px;height:10px;border:1px solid #000;background:#fff"></div><div class="t dig dis" style="left:85px;top:5px">0</div></div><svg class="ic" style="left:586px;top:85px;width:16px;height:16px" viewBox="0 0 16 16"><path d="M2 11L9 8L16 10.5L9 14.5Z" fill="#f0d818" stroke="#a89010" stroke-width="0.7"/><path d="M2 7.5L9 5L16 7.5L9 11Z" fill="#c8daf0" stroke="#3c5c98" stroke-width="0.7"/><path d="M2 4.5L9 1.5L16 4.5L9 8Z" fill="#a8c4e4" stroke="#88a8d0" stroke-width="0.5"/><path d="M0.5 15.5L4 12M1.5 11.5H4.5V14.5" stroke="#102868" stroke-width="1.3" fill="none"/></svg><svg class="ic" style="left:609px;top:85px;width:16px;height:16px" viewBox="0 0 16 16"><path d="M0 11.5L8 9L16 11.5L8 15Z" fill="#c8daf0" stroke="#3c5c98" stroke-width="0.7"/><path d="M0 8.5L8 6L16 8.5L8 12Z" fill="#dce8f6" stroke="#3c5c98" stroke-width="0.7"/><path d="M1 5.5L8 3.5L15 5.5L8 8.5Z" fill="#eef4fb" stroke="#88a8d0" stroke-width="0.5"/><path d="M5.5 6C6 1.5 12.5 0.5 13.5 5.5" fill="none" stroke="#143c80" stroke-width="2"/><path d="M2.2 4L8 4.8L4.6 9Z" fill="#143c80"/></svg><svg class="ic" style="left:632px;top:85px;width:16px;height:16px" viewBox="0 0 16 16"><path d="M0 9L7 6.5L13 9L7 12.5Z" fill="#c8daf0" stroke="#3c5c98" stroke-width="0.7"/><path d="M0 6.5L7 4L13 6.5L7 10Z" fill="#d8e4f4" stroke="#3c5c98" stroke-width="0.7"/><path d="M0 4L7 1L14 4L7 7.5Z" fill="#a8c4e4" stroke="#88a8d0" stroke-width="0.5"/><rect x="6.5" y="7.5" width="9" height="8" fill="#f4f8fc" stroke="#103078" stroke-width="1.2"/><rect x="6.5" y="7.5" width="9" height="2" fill="#103078"/><path d="M8.5 11.5h5M8.5 13.5h5" stroke="#4888c8" stroke-width="0.9"/></svg>
<div class="tb" style="left:657px;top:77px;width:520px;height:28px"></div><div class="gv" style="left:660px;top:80px;height:24px"></div><div class="gv" style="left:664px;top:80px;height:24px"></div><div class="combo" style="left:670px;top:82px;width:149px"><div class="ab"></div><div class="arr"></div><div class="a" style="left:5px;top:5px;width:10px;height:10px;border:1px solid #000;background:#fff"></div><div class="t sun dis" style="left:19px;top:7px">ByLayer</div></div><div class="sep" style="left:822px;top:84px;height:19px"></div><div class="combo" style="left:826px;top:82px;width:160px"><div class="ab"></div><div class="arr"></div><div class="a" style="left:5px;top:10px;width:60px;height:1px;background:#000"></div><div class="t sun dis" style="left:69px;top:7px">ByLayer</div></div><div class="sep" style="left:988px;top:84px;height:19px"></div><div class="combo" style="left:992px;top:82px;width:125px"><div class="ab"></div><div class="arr"></div><div class="a" style="left:5px;top:10px;width:35px;height:1px;background:#000"></div><div class="t sun dis" style="left:44px;top:7px">ByLayer</div></div><div class="sep" style="left:1119px;top:84px;height:19px"></div><div class="combo" style="left:1123px;top:82px;width:120px"><div class="ab"></div><div class="arr"></div><div class="t ss dis" style="left:8px;top:4px;font-size:12px;line-height:13px">随颜色</div></div>
</div>
<div class="a" style="left:8px;top:105px;width:1160px;height:1px;background:#fff"></div><div class="tb" style="left:8px;top:105px;width:25px;height:436px"></div><div class="gh" style="left:11px;top:108px;width:20px"></div><div class="gh" style="left:11px;top:112px;width:20px"></div><svg class="ic" style="left:12px;top:120px;width:16px;height:16px" viewBox="0 0 16 16"><path d="M2.5 13.5L13.5 2.5" stroke="#101010" stroke-width="1.3"/><rect x="0.5" y="12" width="3" height="3" fill="#1478e0"/><rect x="12" y="1" width="3" height="3" fill="#1478e0"/></svg><svg class="ic" style="left:12px;top:142px;width:16px;height:16px" viewBox="0 0 16 16"><path d="M1.5 14.5L14.5 1.5" stroke="#101010" stroke-width="1.3"/><path d="M0.5 15.5L1.5 11L5 14.5ZM15.5 0.5L11 1.5L14.5 5Z" fill="#101010"/><rect x="6.5" y="6.5" width="3" height="3" fill="#1478e0"/></svg><svg class="ic" style="left:12px;top:164px;width:16px;height:16px" viewBox="0 0 16 16"><path d="M1.5 12.5H11C15.5 12 15.5 5 10.5 5" fill="none" stroke="#101010" stroke-width="1.2"/><rect x="0" y="11" width="3" height="3" fill="#1478e0"/><rect x="9" y="11" width="3" height="3" fill="#1478e0"/><rect x="9" y="3.5" width="3" height="3" fill="#1478e0"/></svg><svg class="ic" style="left:12px;top:186px;width:16px;height:16px" viewBox="0 0 16 16"><path d="M8 1L14.5 6L12 14.5H4L1.5 6Z" fill="url(#gbox)" stroke="#101010" stroke-width="1.2"/></svg><svg class="ic" style="left:12px;top:208px;width:16px;height:16px" viewBox="0 0 16 16"><path d="M1.5 5.5H14.5V13.5H1.5Z" fill="url(#gbox)" stroke="#101010" stroke-width="1.2"/><rect x="0" y="12" width="3" height="3" fill="#1478e0"/><rect x="13" y="4" width="3" height="3" fill="#1478e0"/></svg><svg class="ic" style="left:12px;top:230px;width:16px;height:16px" viewBox="0 0 16 16"><path d="M1.5 14.5C2 7 7 2.5 14.5 2" fill="none" stroke="#101010" stroke-width="1.2"/><rect x="0" y="13" width="3" height="3" fill="#1478e0"/><rect x="5" y="5" width="3" height="3" fill="#1478e0"/><rect x="13" y="0.5" width="3" height="3" fill="#1478e0"/></svg><svg class="ic" style="left:12px;top:252px;width:16px;height:16px" viewBox="0 0 16 16"><circle cx="8" cy="8" r="6.8" fill="url(#gbox)" stroke="#101010" stroke-width="1.3"/><path d="M8 8L13 3.5" stroke="#1458b8" stroke-width="1.2"/><rect x="6.5" y="6.5" width="3" height="3" fill="#1478e0"/></svg><svg class="ic" style="left:12px;top:274px;width:16px;height:16px" viewBox="0 0 16 16"><path d="M4 2C6 0 9 1 9.5 3C12 1.5 15 3.5 13.5 6.5C16 8 15.5 12 12.5 12C12 15 8 15.5 7 13C4.5 14.5 1 12 3 9.5C0 8 0.5 3 4 2Z" fill="url(#gbox)" stroke="#101010" stroke-width="1.3"/></svg><svg class="ic" style="left:12px;top:296px;width:16px;height:16px" viewBox="0 0 16 16"><path d="M1 15C2 8 5 6.5 8 8.5C11 10.5 14 8 15 1" fill="none" stroke="#101010" stroke-width="1.2"/></svg><svg class="ic" style="left:12px;top:318px;width:16px;height:16px" viewBox="0 0 16 16"><ellipse cx="8" cy="8" rx="6.8" ry="4.2" fill="url(#gbox)" stroke="#101010" stroke-width="1.3"/><rect x="6.5" y="2.3" width="3" height="3" fill="#1478e0"/><rect x="0" y="6.5" width="3" height="3" fill="#1478e0"/><rect x="13" y="6.5" width="3" height="3" fill="#1478e0"/></svg><svg class="ic" style="left:12px;top:340px;width:16px;height:16px" viewBox="0 0 16 16"><path d="M2 7C3 2 12 2 14 6C15.5 10 11 13 7 12.5" fill="url(#gbox)" stroke="#101010" stroke-width="1.3"/><rect x="0.5" y="6" width="3" height="3" fill="#1478e0"/><rect x="6" y="11" width="3" height="3" fill="#1478e0"/></svg><svg class="ic" style="left:12px;top:362px;width:16px;height:16px" viewBox="0 0 16 16"><path d="M6.5 0.5H12.5L15.5 3.5V12.5H6.5Z" fill="url(#gpage)" stroke="#7890b0" stroke-width="0.8"/><rect x="1.5" y="4.5" width="7.5" height="5.5" fill="#f4e880" stroke="#284880" stroke-width="1"/><circle cx="9.5" cy="11" r="3.4" fill="#ece078" stroke="#284880" stroke-width="1"/><path d="M16 12V16H12Z" fill="#000"/><rect x="0" y="9" width="3" height="3" fill="#1478e0"/></svg><svg class="ic" style="left:12px;top:384px;width:16px;height:16px" viewBox="0 0 16 16"><rect x="2.5" y="3" width="7.5" height="5.5" fill="#f4e880" stroke="#284880" stroke-width="1"/><circle cx="11" cy="10.3" r="3.6" fill="#ece078" stroke="#284880" stroke-width="1"/><rect x="1" y="7" width="3" height="3" fill="#1478e0"/></svg><svg class="ic" style="left:12px;top:406px;width:16px;height:16px" viewBox="0 0 16 16"><rect x="6.5" y="6.5" width="3" height="3" fill="#1478e0"/></svg><svg class="ic" style="left:12px;top:428px;width:16px;height:16px" viewBox="0 0 16 16"><rect x="3" y="3" width="10" height="10" fill="#fff"/><path d="M13 6L10 3M13 9L7 3M13 12L4 3M11 13L3 5M8 13L3 8M5 13L3 11" stroke="#285898" stroke-width="1"/><path d="M3.5 0V16M12.5 0V16M0 3.5H16M0 12.5H16" stroke="#285898" stroke-width="1.3"/></svg><svg class="ic" style="left:12px;top:450px;width:16px;height:16px" viewBox="0 0 16 16"><defs><linearGradient id="ggr" x1="0" y1="0" x2="1" y2="1"><stop offset="0" stop-color="#0c2868"/><stop offset="0.45" stop-color="#405070"/><stop offset="1" stop-color="#fff090"/></linearGradient></defs><rect x="3" y="3" width="10" height="10" fill="url(#ggr)"/><path d="M3.5 0V16M12.5 0V16M0 3.5H16M0 12.5H16" stroke="#182848" stroke-width="1.4"/><path d="M8 14L14 6" stroke="#182848" stroke-width="0.9"/></svg><svg class="ic" style="left:12px;top:472px;width:16px;height:16px" viewBox="0 0 16 16"><path d="M0.5 1.5H11L15.5 7V13.5H0.5Z" fill="#d4e0f0" stroke="#1c50a0" stroke-width="1.2"/><circle cx="7.5" cy="7" r="3" fill="#fff" stroke="#304870" stroke-width="1.2"/></svg><svg class="ic" style="left:12px;top:494px;width:16px;height:16px" viewBox="0 0 16 16"><rect x="1" y="1" width="14" height="13.5" fill="#4878b8"/><rect x="1" y="1" width="14" height="2.6" fill="#4888f0"/><g fill="#eef4fc"><rect x="2.2" y="4.8" width="3" height="2.2"/><rect x="6.5" y="4.8" width="3" height="2.2"/><rect x="10.8" y="4.8" width="3" height="2.2"/><rect x="2.2" y="8.1" width="3" height="2.2"/><rect x="6.5" y="8.1" width="3" height="2.2"/><rect x="10.8" y="8.1" width="3" height="2.2"/><rect x="2.2" y="11.4" width="3" height="2.2"/><rect x="6.5" y="11.4" width="3" height="2.2"/><rect x="10.8" y="11.4" width="3" height="2.2"/></g></svg><svg class="ic" style="left:12px;top:516px;width:16px;height:16px" viewBox="0 0 16 16"><text x="8" y="15" text-anchor="middle" font-family="Liberation Sans,sans-serif" font-size="19" fill="#101010">A</text></svg>
<div class="tb" style="left:1143px;top:105px;width:25px;height:392px"></div><div class="gh" style="left:1146px;top:108px;width:20px"></div><div class="gh" style="left:1146px;top:112px;width:20px"></div><svg class="ic" style="left:1147px;top:120px;width:16px;height:16px" viewBox="0 0 16 16"><path d="M0.5 14.5H15.5" stroke="#202020" stroke-width="1.1"/><path d="M3.6 11.6L13.4 0.8L15.6 2.8L6.2 14Z" fill="#fff" stroke="#284890" stroke-width="0.8"/><path d="M9.5 5.1L13.4 0.8L15.6 2.8L11.9 7.3Z" fill="#f0c418"/><path d="M3.6 11.6L5.6 9.4L8.1 11.7L6.2 14Z" fill="#e06060"/><path d="M5.6 9.4L6.8 8.1L9.3 10.3L8.1 11.7Z" fill="#38b8b0"/></svg><svg class="ic" style="left:1147px;top:142px;width:16px;height:16px" viewBox="0 0 16 16"><circle cx="3.8" cy="3.8" r="2.9" fill="#e4ecf8" stroke="#202020" stroke-width="1.2"/><circle cx="9" cy="11" r="3.3" fill="#e4ecf8" stroke="#202020" stroke-width="1.2"/><circle cx="12" cy="12.6" r="3" fill="#e4ecf8" fill-opacity="0.75" stroke="#202020" stroke-width="1.2"/><path d="M7.5 2.5C10.5 1.2 13 3 13 6" fill="none" stroke="#143c80" stroke-width="1.6"/><path d="M10.2 5.2H15.8L13 9Z" fill="#143c80"/></svg><svg class="ic" style="left:1147px;top:164px;width:16px;height:16px" viewBox="0 0 16 16"><path d="M6 3V14H0.8Z" fill="#e4ecf8" stroke="#202020" stroke-width="1.1"/><path d="M10.5 3V14H15.5Z" fill="#e4ecf8" stroke="#202020" stroke-width="1.1"/><path d="M8.3 0V16" stroke="#1458c8" stroke-width="1.1"/></svg><svg class="ic" style="left:1147px;top:186px;width:16px;height:16px" viewBox="0 0 16 16"><path d="M15.5 15H4C-0.5 15 -0.5 9 4 8.8C3.5 1 13 1 13 8.5H15.5" fill="#f4f8fc" stroke="#202020" stroke-width="1.3"/><path d="M15.5 12.3H5C3.2 12.3 3.2 11 5.5 11H7V8.5C7 5 10.3 5 10.3 8.5V11H15.5" fill="#fff" stroke="#1458c8" stroke-width="1.3"/></svg><svg class="ic" style="left:1147px;top:208px;width:16px;height:16px" viewBox="0 0 16 16"><g fill="url(#gbox)" stroke="#101018" stroke-width="1.3"><rect x="1" y="1" width="5.5" height="5.5"/><rect x="9.5" y="1" width="5.5" height="5.5"/><rect x="1" y="9.5" width="5.5" height="5.5"/><rect x="9.5" y="9.5" width="5.5" height="5.5"/></g></svg><svg class="ic" style="left:1147px;top:230px;width:16px;height:16px" viewBox="0 0 16 16"><path d="M8 1.5V14.5M1.5 8H14.5" stroke="#2c5c98" stroke-width="2"/><path d="M8 0L11 3.5H5ZM8 16L11 12.5H5ZM0 8L3.5 5V11ZM16 8L12.5 5V11Z" fill="#2c5c98"/></svg><svg class="ic" style="left:1147px;top:252px;width:16px;height:16px" viewBox="0 0 16 16"><path d="M5 3.6C0.5 6.5 1 14 8 14.8C15 14.5 15.5 6 10.5 3.2" fill="none" stroke="#2c5c98" stroke-width="2.1"/><path d="M1.5 0.8L8.5 1.8L4 7Z" fill="#2c5c98"/></svg><svg class="ic" style="left:1147px;top:274px;width:16px;height:16px" viewBox="0 0 16 16"><rect x="0.8" y="0.8" width="14.5" height="14.5" fill="url(#gbox)" stroke="#2c5c98" stroke-width="1.2"/><rect x="1" y="7" width="8" height="8" fill="none" stroke="#101010" stroke-width="1.3" stroke-dasharray="1.3 1.3"/></svg><svg class="ic" style="left:1147px;top:296px;width:16px;height:16px" viewBox="0 0 16 16"><path d="M7.5 1L15 15H7.5Z" fill="#dce6f4" stroke="#2c5c98" stroke-width="1.2"/><path d="M6 1.5H1V15H6" fill="none" stroke="#101010" stroke-width="1.5"/><path d="M6 2V15" stroke="#101010" stroke-width="1.3" stroke-dasharray="1.3 1.3"/></svg><svg class="ic" style="left:1147px;top:318px;width:16px;height:16px" viewBox="0 0 16 16"><path d="M0.5 8.5H6.5" stroke="#101010" stroke-width="1.3"/><path d="M8.5 8.5H16" stroke="#1458c8" stroke-width="1.1" stroke-dasharray="2 1.3"/><path d="M11 2L5 14.5" stroke="#1458c8" stroke-width="1.3"/></svg><svg class="ic" style="left:1147px;top:340px;width:16px;height:16px" viewBox="0 0 16 16"><path d="M0.5 8.5H8" stroke="#101010" stroke-width="1.2" stroke-dasharray="2.5 1.5"/><path d="M8 8.5H12" stroke="#1458c8" stroke-width="1.1" stroke-dasharray="2 1.3"/><path d="M15 1.5L10 13.5" stroke="#1458c8" stroke-width="1.3"/></svg><svg class="ic" style="left:1147px;top:362px;width:16px;height:16px" viewBox="0 0 16 16"><rect x="0.8" y="3.5" width="14.5" height="10.5" fill="url(#gbox)" stroke="#101010" stroke-width="1.3"/><rect x="6.8" y="2" width="3" height="3" fill="#3c68a8"/></svg><svg class="ic" style="left:1147px;top:384px;width:16px;height:16px" viewBox="0 0 16 16"><rect x="0.8" y="3.5" width="14.5" height="10.5" fill="url(#gbox)" stroke="#101010" stroke-width="1.3"/><rect x="5.5" y="2.5" width="5.5" height="2.2" fill="#f0f0f0"/><rect x="3" y="2" width="3" height="3" fill="#3c68a8"/><rect x="10.5" y="2" width="3" height="3" fill="#3c68a8"/></svg><svg class="ic" style="left:1147px;top:406px;width:16px;height:16px" viewBox="0 0 16 16"><path d="M0 8H16" stroke="#101010" stroke-width="1.6"/><path d="M3.5 4.5L8 8L3.5 11.5ZM12.5 4.5L8 8L12.5 11.5Z" fill="#284c78"/></svg><svg class="ic" style="left:1147px;top:428px;width:16px;height:16px" viewBox="0 0 16 16"><path d="M0.8 1.5V15" stroke="#101010" stroke-width="1.3"/><path d="M1 1H16" stroke="#101010" stroke-width="1.3"/><path d="M1 1.2H9M0.8 1V9" stroke="#f0f0f0" stroke-width="1.8" stroke-dasharray="1.2 1.2"/><path d="M1 9L9 1.5" stroke="#1458c8" stroke-width="1.3"/></svg><svg class="ic" style="left:1147px;top:450px;width:16px;height:16px" viewBox="0 0 16 16"><path d="M0.8 1.5V15" stroke="#101010" stroke-width="1.3"/><path d="M1 1H16" stroke="#101010" stroke-width="1.3"/><path d="M1 1.2H9M0.8 1V9" stroke="#f0f0f0" stroke-width="1.8" stroke-dasharray="1.2 1.2"/><path d="M1 10C1.5 4.5 4.5 2 10 1.5" fill="none" stroke="#1458c8" stroke-width="1.5"/></svg><svg class="ic" style="left:1147px;top:472px;width:16px;height:16px" viewBox="0 0 16 16"><path d="M2 13L9 5L12 8L5 15.5Z" fill="#e02818"/><path d="M4 9L7 12" stroke="#f8e038" stroke-width="1.6"/><path d="M1 6L6 8L4.5 3.5L8.5 6.5L9 2L10.5 6L14 7L10.5 9L12 13L8.5 10.5L5.5 13.5L6 10Z" fill="#f8d020" opacity="0.85"/><path d="M3 12L8 6.5L10.5 9L5.5 14.5Z" fill="#d82018"/><path d="M11 4L15.5 0.5M12 1L15 3.5M13.5 0V4.5M11 2.5H16" stroke="#a8b0b8" stroke-width="0.8"/></svg><div class="tb" style="left:1143px;top:497px;width:25px;height:106px"></div><div class="gh" style="left:1146px;top:500px;width:20px"></div><div class="gh" style="left:1146px;top:504px;width:20px"></div><svg class="ic" style="left:1147px;top:513px;width:16px;height:16px" viewBox="0 0 16 16"><rect x="1" y="1" width="8" height="8" fill="#e4ecf8" stroke="#2c5c98" stroke-width="1"/><rect x="8" y="9" width="7" height="6.5" fill="url(#gbox)" stroke="#2c5c98" stroke-width="1"/><rect x="4" y="4" width="8.5" height="8.5" fill="#4878b0" stroke="#2c5c98" stroke-width="1"/></svg><svg class="ic" style="left:1147px;top:535px;width:16px;height:16px" viewBox="0 0 16 16"><rect x="4" y="4" width="8.5" height="8.5" fill="#4878b0" stroke="#2c5c98" stroke-width="1"/><rect x="1" y="1" width="8" height="7" fill="url(#gbox)" stroke="#2c5c98" stroke-width="1"/><rect x="8.5" y="9.5" width="7" height="6" fill="url(#gbox)" stroke="#2c5c98" stroke-width="1"/></svg><svg class="ic" style="left:1147px;top:557px;width:16px;height:16px" viewBox="0 0 16 16"><rect x="5" y="6.5" width="10" height="9" fill="url(#gbox)" stroke="#2c5c98" stroke-width="1"/><rect x="1.5" y="1.5" width="10.5" height="9.5" fill="#4878b0" stroke="#2c5c98" stroke-width="1"/></svg><svg class="ic" style="left:1147px;top:579px;width:16px;height:16px" viewBox="0 0 16 16"><rect x="1.5" y="1.5" width="10.5" height="9.5" fill="#4878b0" stroke="#2c5c98" stroke-width="1"/><rect x="5" y="6.5" width="10" height="9" fill="url(#gbox)" stroke="#2c5c98" stroke-width="1"/></svg>
<div class="a" style="left:34px;top:106px;width:1108px;height:523px;background:#f0f0f0;border-left:1px solid #a0a0a0;border-top:1px solid #a0a0a0;border-right:1px solid #fff;border-bottom:1px solid #fff"></div><div class="a" style="left:35px;top:107px;width:1106px;height:520px;background:#f0f0f0;border-left:1px solid #696969;border-top:1px solid #696969"></div><svg id="canvas" class="a" style="left:36px;top:108px" width="1087" height="504" viewBox="36 108 1087 504" shape-rendering="crispEdges"><rect x="36" y="108" width="1087" height="504" fill="#000"/><path d="M326 284L483 266.5L549.5 409.5L432 517.5L295.5 441.5Z" fill="none" stroke="#fff" stroke-width="1" stroke-dasharray="3 3"/><g fill="none" stroke="#fff" stroke-width="1"><rect x="46.5" y="590.5" width="8" height="10"/><path d="M50.5 590V537M46.5 547.5H54.5L50.5 536.5ZM49.5 547V543M51.5 547V543M55 595.5H109M98.5 590.5V600.5L109.5 595.5ZM99 594.5H102M99 596.5H102M47.5 515.5L52.5 522.5L57.5 515.5M52.5 522.5V528.5M119.5 590.5L129.5 601.5M129.5 590.5L119.5 601.5"/></g></svg>
<div class="a vsb" style="left:1123px;top:108px;width:17px;height:504px"></div><div class="au" style="left:1128px;top:115px"></div><div class="ad" style="left:1128px;top:601px"></div><div class="thumb tv" style="left:1124px;top:292px;width:15px;height:13px"></div><div class="a" style="left:36px;top:612px;width:1104px;height:16px;background:#f0f0f0"></div><div class="nav" style="left:36px;top:612px"></div><div class="nav" style="left:50px;top:612px"></div><div class="nav" style="left:64px;top:612px"></div><div class="nav" style="left:78px;top:612px"></div><svg class="a" style="left:36px;top:612px" width="56" height="15" viewBox="0 0 56 15"><g fill="#707070"><rect x="4" y="3" width="1.3" height="9"/><path d="M11 3V12L6 7.5Z"/><path d="M25 3V12L20 7.5Z"/><path d="M32 3V12L37 7.5Z"/><path d="M46 3V12L51 7.5Z"/><rect x="51.7" y="3" width="1.3" height="9"/></g></svg><svg class="a" style="left:90px;top:612px" width="150" height="16" viewBox="90 612 150 16"><path d="M92 612L97 626H132L137 612Z" fill="#000"/><path d="M137.5 612.5L132.5 626.5M137 620L140 626.5H178.5L183 612.5M183 620L186 626.5H225L229.5 612.5" fill="none" stroke="#404040" stroke-width="1"/></svg><div class="t ss" style="left:103px;top:615px;color:#fff;font-size:12px">模型</div><div class="t ss" style="left:143px;top:615px;font-size:12px">布局<span class="sun">1</span></div><div class="t ss" style="left:189px;top:615px;font-size:12px">布局<span class="sun">2</span></div><div class="a hsb" style="left:760px;top:612px;width:363px;height:16px"></div><div class="a" style="left:753px;top:613px;width:5px;height:13px;border:1px solid #a8a8a8;border-right:none;background:#fff;border-radius:2px 0 0 2px"></div><div class="a" style="left:1123px;top:612px;width:18px;height:16px;background:#f0f0f0;border-top:1px solid #d8d8d8;border-right:1px solid #e0e0e0"></div><div class="al" style="left:765px;top:616px"></div><div class="ar" style="left:1113px;top:616px"></div><div class="thumb" style="left:993px;top:613px;width:15px;height:14px"></div>
<div class="a" style="left:8px;top:629px;width:1160px;height:1px;background:#fff"></div><div class="a" style="left:8px;top:630px;width:1160px;height:3px;background:#f0f0f0"></div><div class="a" style="left:1143px;top:603px;width:25px;height:25px;background:#f0f0f0"></div><div class="a" style="left:8px;top:633px;width:1160px;height:1px;background:#a0a0a0"></div><div class="a" style="left:8px;top:634px;width:1160px;height:1px;background:#696969"></div><div class="a" style="left:8px;top:635px;width:1160px;height:54px;background:#f0f0f0;border-top:1px solid #f8f8f8"></div><div class="gv" style="left:15px;top:643px;height:42px"></div><div class="gv" style="left:19px;top:643px;height:42px"></div><div class="a" style="left:25px;top:645px;width:1136px;height:44px;background:#fff;border-left:1px solid #696969;border-top:1px solid #696969"></div><div class="a" style="left:24px;top:644px;width:1137px;height:45px;border-left:1px solid #808080;border-top:1px solid #808080"></div><div class="a" style="left:25px;top:668px;width:1136px;height:1px;background:#808080"></div><div class="a" style="left:1161px;top:643px;width:7px;height:46px;background:#f0f0f0"></div><div class="t" style="left:26px;top:648px;font-size:15px;line-height:15px;letter-spacing:1px;font-family:'Liberation Mono','Noto Serif CJK SC',monospace">命令<span style="font-size:13.33px">:</span></div><div class="a vsb" style="left:1144px;top:646px;width:17px;height:22px"></div><div class="au" style="left:1149px;top:651px"></div><div class="ad" style="left:1149px;top:661px"></div><div class="a hsb" style="left:1076px;top:670px;width:67px;height:17px"></div><div class="a" style="left:1143px;top:669px;width:18px;height:20px;background:#f0f0f0"></div><div class="al" style="left:1083px;top:674px"></div><div class="ar" style="left:1132px;top:674px"></div><div class="thumb" style="left:1094px;top:670px;width:15px;height:16px"></div>
<div class="a" style="left:8px;top:689px;width:1160px;height:1px;background:#a8a8a8"></div><div class="a" style="left:8px;top:690px;width:1160px;height:1px;background:#fff"></div><div class="a" id="status" style="left:8px;top:691px;width:1160px;height:22px"></div><div class="sunk" style="left:13px;top:694px;width:186px;height:18px"></div><div class="t dig" style="left:15px;top:698px">1619<span class="pc">.</span>5674<span class="pc">,</span><span class="pc">&nbsp;</span>1682<span class="pc">.</span>5432<span class="pc">,</span><span class="pc">&nbsp;</span>0<span class="pc">.</span>0000</div><div class="sb0" style="left:204px;top:694px;width:27px"><span class="ss">捕捉</span></div><div class="sb0" style="left:236px;top:694px;width:27px"><span class="ss">栅格</span></div><div class="sb0" style="left:268px;top:694px;width:27px"><span class="ss">正交</span></div><div class="sb1" style="left:299px;top:694px;width:28px"><span class="ss">极轴</span></div><div class="sb1" style="left:330px;top:694px;width:53px"><span class="ss">对象捕捉</span></div><div class="sb1" style="left:386px;top:694px;width:53px"><span class="ss">对象追踪</span></div><div class="sb1" style="left:443px;top:694px;width:28px"><span class="sun">DUCS</span></div><div class="sb1" style="left:475px;top:694px;width:22px"><span class="sun">DYN</span></div><div class="sb0" style="left:501px;top:694px;width:28px"><span class="ss">线宽</span></div><div class="sb1" style="left:533px;top:694px;width:28px"><span class="ss">模型</span></div><div class="t ss" style="left:937px;top:699px;font-size:12px">注释比例<span class="sun" style="font-size:10px">:</span></div><div class="t dig" style="left:1000px;top:698px">1<span class="pc">:</span>1</div><div class="dd" style="left:1021px;top:703px;border-left-width:4px;border-right-width:4px;border-top-width:4px"></div><svg class="a" style="left:1041px;top:695px" width="16" height="17" viewBox="0 0 16 17"><path d="M9 10.5H12V13H9Z" fill="#808890"/><circle cx="10.5" cy="5.5" r="4" fill="#fff8a0" stroke="#e8d850" stroke-width="0.8"/><circle cx="9.8" cy="4.8" r="1.8" fill="#fffff0"/><path d="M1 15.5L3.5 11L2.5 9.5L5 9L6 5.5L7.5 9.5L9.5 10L8.5 11.5L11 15.5H7.5L6 13.5L4.5 15.5Z" fill="#fff" stroke="#2058a8" stroke-width="1.1"/></svg><svg class="a" style="left:1064px;top:695px" width="16" height="17" viewBox="0 0 16 17"><path d="M1 15.5L5.5 7L7.5 10.5L10 9.5L8.5 13L11 15.5H7L5.5 13L4 15.5Z" fill="#f4f4f4" stroke="#a0a0a0" stroke-width="1.1"/><path d="M8 8L14 1M10 9L14.5 4" stroke="#a8a8a8" stroke-width="1.6"/></svg><div class="a" style="left:1089px;top:694px;width:24px;height:19px;background:#f6f5f4;border-left:1px solid #a0a0a0;border-top:1px solid #a0a0a0"></div><svg class="a" style="left:1092px;top:695px" width="18" height="17" viewBox="0 0 18 17"><path d="M9.5 8.5V5C9.5 0.8 16 0.8 16 5V7.5" fill="none" stroke="#705000" stroke-width="3"/><path d="M9.5 8.5V5C9.5 0.8 16 0.8 16 5V7.5" fill="none" stroke="#f8d820" stroke-width="1.6"/><rect x="1" y="7" width="11" height="9.5" rx="2" fill="#e0b010" stroke="#403008" stroke-width="1"/><path d="M2 10H11M2 13H11" stroke="#705808" stroke-width="1"/><path d="M2.5 8.5H10.5M2.5 11.5H10.5M2.5 14.5H10.5" stroke="#fff0a0" stroke-width="0.9"/><rect x="5.5" y="8" width="2" height="7.5" fill="#fffbe0" opacity="0.8"/></svg><div class="dd" style="left:1118px;top:705px;border-left-width:4.5px;border-right-width:4.5px;border-top-width:5px"></div><div class="a" style="left:1135px;top:694px;width:16px;height:16px;border:1px solid #1c4c88;background:linear-gradient(135deg,#e8f0f8,#a8c0dc);box-shadow:inset 0 0 0 1px #fff,inset 0 0 0 2px #7c9cc4"></div><svg class="a" style="left:1155px;top:700px" width="12" height="12" viewBox="0 0 12 12"><g fill="#b8b8b8"><rect x="9" y="1" width="2" height="2"/><rect x="9" y="5" width="2" height="2"/><rect x="5" y="5" width="2" height="2"/><rect x="9" y="9" width="2" height="2"/><rect x="5" y="9" width="2" height="2"/><rect x="1" y="9" width="2" height="2"/></g></svg>
<div class="a" style="left:2px;top:713px;width:1172px;height:6px;background:#d7e4f2"></div>
<div id="dlg" class="a"><div id="dlgcap" class="a"></div><svg class="a" style="left:8px;top:8px" width="16" height="16" viewBox="0 0 16 16"><rect x="0" y="0" width="16" height="16" fill="#fff"/><rect x="1" y="1" width="14" height="14" fill="#18a890"/><path d="M1 1H9V9H1Z" fill="#109880"/><path d="M2.2 9.5L4.3 2.5H6.2L8.6 9.5H7L6.4 7.5H4.2L3.6 9.5Z" fill="#e8fff8"/><path d="M4.6 6.2H6L5.3 4Z" fill="#0a6a5c"/><path d="M5.3 1.5L6.8 4.5" stroke="#063c34" stroke-width="0.9"/><path d="M1 10.5H15M10.5 1V15M12.5 1V8M12.5 13V15" stroke="#fff" stroke-width="1"/><rect x="8.5" y="8.5" width="4" height="4" fill="#0b6b5e" stroke="#fff" stroke-width="1"/><rect x="10" y="10" width="1" height="1" fill="#fff"/><path d="M1.5 14L4.5 12M6 14.5H8.5" stroke="#063c34" stroke-width="1"/></svg><div class="t ss" style="left:28px;top:10px;font-size:12px;line-height:14px">编辑块定义</div><div class="dcap" style="left:312px;width:31px;background:linear-gradient(#c5d6ea,#b3c9e3 50%,#9fbad9 50%,#abc3df)"><svg class="a" style="left:0;top:0" width="29" height="15" viewBox="0 0 29 15"><text x="14.5" y="11.6" text-anchor="middle" font-family="Liberation Sans,sans-serif" font-weight="bold" font-size="13" fill="#fff" stroke="#3c3c3c" stroke-width="2.2" stroke-linejoin="round" paint-order="stroke">?</text></svg></div><div class="dcap" style="left:345px;width:31px;border-color:#4c1c1c;background:linear-gradient(#e8a99c,#d9877a 48%,#c2432b 52%,#d06c50)"><svg class="a" style="left:8px;top:3px" width="13" height="10" viewBox="0 0 13 10"><path d="M2.6 1.2L10.4 8.2M10.4 1.2L2.6 8.2" stroke="#484848" stroke-width="4.4" fill="none" stroke-linecap="butt"/><path d="M3.2 1.8L9.8 7.6M9.8 1.8L3.2 7.6" stroke="#f6f6f6" stroke-width="2.5" fill="none" stroke-linecap="butt"/></svg></div><div id="dlgc" class="a"><div class="t ss" style="left:11px;top:13px;font-size:12px">要创建或编辑的块<span class="sun" style="font-size:10px">(B)</span></div><div class="a" style="left:12px;top:26px;width:120px;height:18px;border:1px solid #7eb4ea;border-radius:2px;background:#fff;box-shadow:inset 0 0 0 1px #e0ecf8"><span class="a ss" style="left:2px;top:2px;height:12px;line-height:12px;font-size:12px;background:#3399ff;color:#fff;white-space:nowrap">测试1</span></div><div class="a" style="left:12px;top:48px;width:120px;height:180px;border:1px solid #828790;background:#fff"><div class="t ss" style="left:2px;top:1px;font-size:12px;line-height:12px">&lt;当前图形&gt;</div><div class="a ss" style="left:1px;top:13px;width:116px;height:12px;background:#3399ff;color:#fff;font-size:12px;line-height:12px;white-space:nowrap">测试1</div></div><div class="grp" style="left:143px;top:27px;width:218px;height:122px"></div><div class="t ss glab" style="left:150px;top:21px">预览</div><svg class="a" style="left:158px;top:38px" width="188" height="104" viewBox="560 272 188 104" shape-rendering="crispEdges"><rect x="560" y="272" width="188" height="104" fill="#000"/><path d="M618.5 283.5L677.5 277.5L701.5 330.5L657.5 370.5L606.5 341.5Z" fill="none" stroke="#fff" stroke-width="1"/></svg><div class="grp" style="left:143px;top:164px;width:218px;height:64px"></div><div class="t ss glab" style="left:150px;top:158px">说明</div><div class="a" style="left:336px;top:176px;width:15px;height:47px;background:linear-gradient(90deg,#ebebeb,#f6f6f6 40%,#f3f3f3)"></div><div class="au" style="left:340px;top:183px;border-bottom-color:#8c8c8c"></div><div class="ad" style="left:340px;top:212px;border-top-color:#8c8c8c"></div><div class="btn def" style="left:136px;top:250px;width:73px"><span>确定</span></div><div class="btn" style="left:216px;top:250px;width:73px"><span>取消</span></div><div class="btn" style="left:295px;top:250px;width:73px"><span>帮助<span class="sun" style="font-size:10px">(H)</span></span></div></div></div>
</body></html>
